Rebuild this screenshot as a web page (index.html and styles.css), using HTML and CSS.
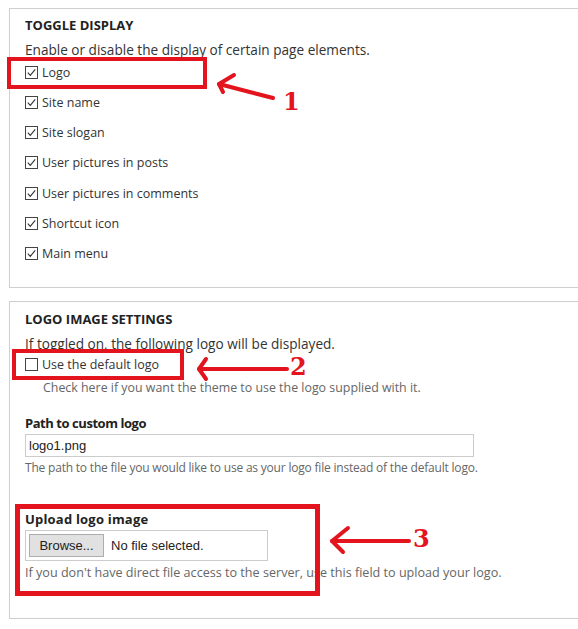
FILE: index.html
```html
<!DOCTYPE html>
<html>
<head>
<meta charset="utf-8">
<link rel="stylesheet" href="styles.css">
</head>
<body>
<div class="page">
  <section class="fieldset fs1">
    <h2 class="legend">TOGGLE DISPLAY</h2>
    <p class="intro">Enable or disable the display of certain page elements.</p>
    <ul class="checks">
      <li><svg class="cb" viewBox="0 0 13 13"><rect x="0.5" y="0.5" width="12" height="12"/><polyline points="2.8,6.6 5.3,9.3 10.2,3.4"/></svg>Logo</li>
      <li><svg class="cb" viewBox="0 0 13 13"><rect x="0.5" y="0.5" width="12" height="12"/><polyline points="2.8,6.6 5.3,9.3 10.2,3.4"/></svg>Site name</li>
      <li><svg class="cb" viewBox="0 0 13 13"><rect x="0.5" y="0.5" width="12" height="12"/><polyline points="2.8,6.6 5.3,9.3 10.2,3.4"/></svg>Site slogan</li>
      <li><svg class="cb" viewBox="0 0 13 13"><rect x="0.5" y="0.5" width="12" height="12"/><polyline points="2.8,6.6 5.3,9.3 10.2,3.4"/></svg>User pictures in posts</li>
      <li><svg class="cb" viewBox="0 0 13 13"><rect x="0.5" y="0.5" width="12" height="12"/><polyline points="2.8,6.6 5.3,9.3 10.2,3.4"/></svg>User pictures in comments</li>
      <li><svg class="cb" viewBox="0 0 13 13"><rect x="0.5" y="0.5" width="12" height="12"/><polyline points="2.8,6.6 5.3,9.3 10.2,3.4"/></svg>Shortcut icon</li>
      <li><svg class="cb" viewBox="0 0 13 13"><rect x="0.5" y="0.5" width="12" height="12"/><polyline points="2.8,6.6 5.3,9.3 10.2,3.4"/></svg>Main menu</li>
    </ul>
  </section>

  <section class="fieldset fs2">
    <h2 class="legend">LOGO IMAGE SETTINGS</h2>
    <p class="intro">If toggled on, the following logo will be displayed.</p>
    <div class="check-row"><svg class="cb" viewBox="0 0 13 13"><rect x="0.5" y="0.5" width="12" height="12"/></svg>Use the default logo</div>
    <p class="desc indent">Check here if you want the theme to use the logo supplied with it.</p>

    <label class="field-label label-path">Path to custom logo</label>
    <div class="text-input">logo1.png</div>
    <p class="desc desc-path">The path to the file you would like to use as your logo file instead of the default logo.</p>

    <label class="field-label label-upload">Upload logo image</label>
    <div class="file-input"><span class="browse">Browse...</span><span class="nofile">No file selected.</span></div>
    <p class="desc desc-upload">If you don't have direct file access to the server, use this field to upload your logo.</p>
  </section>

  <div class="mark box1"></div>
  <div class="mark box2"></div>
  <div class="mark box3"></div>
  <svg class="arrows" width="578" height="629" viewBox="0 0 578 629">
    <g fill="none" stroke="#e3141d" stroke-width="4" stroke-linecap="round" stroke-linejoin="round">
      <path d="M273 98 L219 84"/>
      <path d="M234 75 L219 84 L223 92"/>
      <path d="M287 369 L199 369"/>
      <path d="M206 359 L199 369 L206 379"/>
      <path d="M409 541 L332 541"/>
      <path d="M348 528 L332 541 L343 552"/>
    </g>
  </svg>
  <span class="num n1">1</span>
  <span class="num n2">2</span>
  <span class="num n3">3</span>
</div>
</body>
</html>
```
FILE: styles.css
```css
html, body {
  margin: 0;
  padding: 0;
  background: #fff;
}
body {
  width: 578px;
  height: 629px;
  overflow: hidden;
  font-family: "Open Sans", "DejaVu Sans", sans-serif;
  color: #333;
}
.page {
  position: relative;
  width: 578px;
  height: 629px;
  padding-top: 8px;
  box-sizing: border-box;
}
.fieldset {
  margin-left: 9px;
  width: 620px;
  border: 1px solid #cfcfcf;
  border-right: none;
  padding: 0 0 0 15px;
  box-sizing: border-box;
}
.fs1 {
  padding-top: 7px;
  padding-bottom: 24px;
}
.fs2 {
  margin-top: 13px;
  padding-top: 8px;
  padding-bottom: 37px;
}
.legend {
  margin: 0;
  font-size: 13px;
  line-height: 18px;
  font-weight: 700;
  color: #222;
}
.intro {
  margin: 7px 0 0;
  font-size: 13.6px;
  line-height: 18px;
  color: #333;
}
.checks {
  list-style: none;
  margin: 4px 0 0;
  padding: 0;
}
.checks li, .check-row {
  display: flex;
  align-items: center;
  height: 18px;
  font-size: 12.5px;
  color: #333;
}
.checks li + li {
  margin-top: 12.33px;
}
.check-row {
  margin-top: 3px;
}
.cb {
  width: 13px;
  height: 13px;
  margin-right: 4px;
  flex: none;
}
.cb rect {
  fill: #fff;
  stroke: #444;
  stroke-width: 1;
}
.cb polyline {
  fill: none;
  stroke: #333;
  stroke-width: 1.1;
}
.desc {
  margin: 0;
  font-size: 12px;
  line-height: 16px;
  color: #666;
}
.indent {
  margin-top: 6px;
  padding-left: 18px;
  font-size: 12.4px;
}
.field-label {
  display: block;
  font-size: 13px;
  line-height: 18px;
  font-weight: 700;
  color: #222;
}
.label-path { margin-top: 18px; letter-spacing: -0.45px; }
.label-upload { margin-top: 34px; letter-spacing: 0.2px; }
.text-input {
  margin-top: 2px;
  width: 449px;
  height: 23px;
  box-sizing: border-box;
  border: 1px solid #ccc;
  padding-left: 3px;
  font-family: "Liberation Sans", Arial, sans-serif;
  font-size: 13px;
  line-height: 21px;
  color: #222;
}
.desc-path { margin-top: 3px; letter-spacing: -0.2px; }
.file-input {
  margin-top: 2px;
  width: 243px;
  height: 31px;
  box-sizing: border-box;
  border: 1px solid #ccc;
  display: flex;
  align-items: center;
  padding-left: 3px;
  font-family: "Liberation Sans", Arial, sans-serif;
  font-size: 13px;
  color: #222;
}
.browse {
  width: 75px;
  height: 23px;
  box-sizing: border-box;
  border: 1px solid #adadad;
  background: #e1e1e1;
  display: flex;
  align-items: center;
  justify-content: center;
}
.nofile {
  margin-left: 7px;
}
.desc-upload { margin-top: 4px; font-size: 12.6px; }

.mark {
  position: absolute;
  border: 4px solid #e3141d;
  box-sizing: border-box;
}
.box1 { left: 7px; top: 57px; width: 200px; height: 32px; }
.box2 { left: 12px; top: 349px; width: 172px; height: 31px; }
.box3 { left: 15px; top: 504px; width: 305px; height: 92px; border-width: 5px; }
.arrows {
  position: absolute;
  left: 0;
  top: 0;
}
.num {
  position: absolute;
  font-family: "DejaVu Serif", serif;
  font-weight: 700;
  color: #e3141d;
  font-size: 24px;
  line-height: 18px;
}
.n1 { left: 283px; top: 93px; }
.n2 { left: 290px; top: 358px; }
.n3 { left: 413px; top: 530px; }
```
